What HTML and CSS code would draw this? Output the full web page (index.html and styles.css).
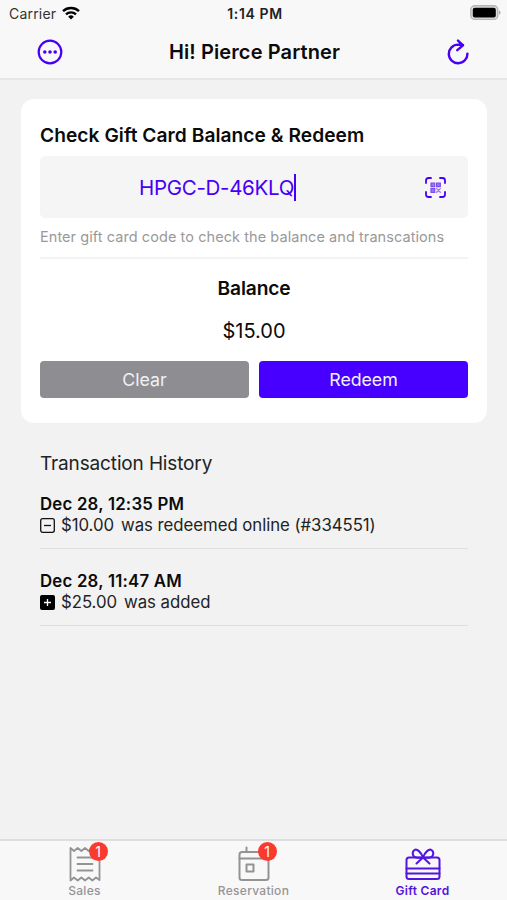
FILE: index.html
```html
<!DOCTYPE html>
<html lang="en">
<head>
<meta charset="utf-8">
<title>Gift Card</title>
<link rel="stylesheet" href="styles.css">
</head>
<body>
<div class="app">
  <header class="header">
    <div class="status">
      <div class="carrier"><span class="carrier-name">Carrier</span>
        <svg class="wifi" width="18" height="14" viewBox="0 0 18 14"><path d="M1 5.2a11.7 11.7 0 0 1 16 0M4 8.3a7.4 7.4 0 0 1 10 0" fill="none" stroke="#000" stroke-width="2.4"/><path d="M9 13.6 6.2 10.7a4 4 0 0 1 5.6 0z"/></svg>
      </div>
      <span class="time">1:14 PM</span>
      <svg class="battery" width="31" height="16" viewBox="0 0 31 16"><rect x=".8" y=".8" width="27" height="13.6" rx="4" fill="#ddd" stroke="#b5b5b5" stroke-width="1.4"/><rect x="2.8" y="2.8" width="23" height="9.6" rx="2"/><path d="M29 5.2q3 2.3 0 4.6z" fill="#aaa"/></svg>
    </div>
    <div class="nav">
      <svg width="26" height="26" viewBox="0 0 26 26"><circle cx="13" cy="13" r="11.3" fill="none" stroke="#4700f5" stroke-width="2.2"/><g fill="#4700f5"><circle cx="7.8" cy="13" r="1.8"/><circle cx="13" cy="13" r="1.8"/><circle cx="18.2" cy="13" r="1.8"/></g></svg>
      <h1 class="title">Hi! Pierce Partner</h1>
      <svg width="24" height="26" viewBox="0 0 24 26" fill="none" stroke="#4700f5" stroke-width="2.4" stroke-linecap="round" stroke-linejoin="round"><path d="M21.4 14.6A9.3 9.3 0 1 1 12.1 5.6L17 6M12 1.6 17 6.3 11.3 11.2"/></svg>
    </div>
  </header>
  <main class="main">
    <section class="card">
      <h2 class="card-title">Check Gift Card Balance &amp; Redeem</h2>
      <div class="field">
        <span class="code">HPGC-D-46KLQ</span><i class="caret"></i>
        <svg class="scan" width="21" height="21" viewBox="0 0 21 21" fill="none" stroke="#4700f5" stroke-width="1.8" stroke-linecap="round"><path d="M1 6V3.5Q1 1 3.5 1H6M15 1h2.5Q20 1 20 3.5V6M20 15v2.5Q20 20 17.5 20H15M6 20H3.5Q1 20 1 17.5V15"/><g fill="#9c78f4" stroke="#7c4cf3" stroke-width="1.2"><path d="M6 6h3.7v3.7H6zM11.600 6h3.700v3.700h-3.700zM6 11.600h3.700v3.700H6z"/></g><path d="m11.600 11.600 3.700 3.700M15.300 11.600l-3.700 3.700" stroke="#9672f5" stroke-width="1.300"/></svg>
      </div>
      <p class="hint">Enter gift card code to check the balance and transcations</p>
      <h3 class="balance-label">Balance</h3>
      <p class="balance">$15.00</p>
      <div class="actions">
        <button class="btn clear">Clear</button>
        <button class="btn redeem">Redeem</button>
      </div>
    </section>
    <section class="history">
      <h2 class="history-title">Transaction History</h2>
      <article class="entry">
        <h3 class="date">Dec 28, 12:35 PM</h3>
        <p class="detail"><svg width="15" height="15" viewBox="0 0 15 15" fill="none" stroke="#111" stroke-width="1.3"><rect x=".7" y=".7" width="13.6" height="13.6" rx="2"/><path d="M4 7.5h7"/></svg><span class="amount">$10.00</span><span class="what">was redeemed online (#334551)</span></p>
      </article>
      <article class="entry">
        <h3 class="date">Dec 28, 11:47 AM</h3>
        <p class="detail"><svg width="15" height="15" viewBox="0 0 15 15"><rect width="15" height="15" rx="2"/><path d="M4 7.5h7M7.5 4v7" stroke="#fff" stroke-width="1.3"/></svg><span class="amount">$25.00</span><span class="what">was added</span></p>
      </article>
    </section>
  </main>
  <nav class="tabs">
    <a class="tab"><span class="icon"><svg width="32" height="36" viewBox="0 0 32 36" fill="none" stroke="#939395" stroke-width="1.8" stroke-linejoin="round" stroke-linecap="round"><path d="M1.5 2 5 5l3.700-3 3.700 3L16 2l3.700 3 3.700-3L27 5l3.500-3v32L27 31.500 23.400 34.500l-3.700-3L16 34.500l-3.600-3-3.700 3L5 31.500 1.500 34.500zM8.500 11.500h15M8.500 18h15M8.500 24.500h15"/></svg><b class="badge">1</b></span><span class="label sales">Sales</span></a>
    <a class="tab"><span class="icon"><svg width="32" height="36" viewBox="0 0 32 36" fill="none" stroke="#939395" stroke-width="2" stroke-linejoin="round" stroke-linecap="round"><rect x="1.500" y="6" width="29" height="28" rx="2.500"/><path d="M1.500 12.500h29M8.500 6V1.500M23.500 6V1.500"/><rect x="8.500" y="18.500" width="7" height="7"/></svg><b class="badge">1</b></span><span class="label">Reservation</span></a>
    <a class="tab active"><span class="icon"><svg width="36" height="36" viewBox="0 0 36 36" fill="none" stroke="#5216e0" stroke-width="2" stroke-linejoin="round" stroke-linecap="round"><rect x="1.500" y="11.500" width="33" height="21.500" rx="2.500"/><path d="M1.500 22.500h33M1.500 27.500h33M18 11.500 11.500 17.500M18 11.500 24.500 17.500M18 11.500C16 6 12 2.500 9.500 4 6.500 6 7.500 11 11 11.500q4 .5 7 0 3 .5 7 0c3.500-.5 4.500-5.500 1.500-7.500C24 2.500 20 6 18 11.500"/></svg></span><span class="label">Gift Card</span></a>
  </nav>
</div>
</body>
</html>
```
FILE: styles.css
```css
* { box-sizing: border-box; }
body, h1, h2, h3, p { margin: 0; font-weight: 400; }
body { font-family: Inter, "Liberation Sans", sans-serif; color: #0b0b0b; background: #f2f2f2; }
svg { display: block; flex: none; }
.app { height: 900px; display: flex; flex-direction: column; }
.header { height: 80px; background: #f8f8f8; border-bottom: 2px solid #e7e7e7; }
.status { height: 27px; display: grid; grid-template-columns: 1fr auto 1fr; align-items: center; padding: 0 6px 0 9px; font-size: 14px; }
.carrier { display: flex; gap: 6px; align-items: center; color: #333; letter-spacing: .2px; }
.wifi { margin-top: -2px; }
.time { font-weight: 600; color: #222; letter-spacing: .6px; }
.battery { justify-self: end; margin-top: -1px; }
.nav { display: flex; justify-content: space-between; align-items: center; height: 49px; padding: 0 37px; }
.title { font-size: 20px; font-weight: 600; letter-spacing: .11px; }
.main { flex: 1; padding: 19px 20px 0 21px; }
.card { height: 324px; background: #fff; border-radius: 13px; padding: 23px 19px 0; }
.card-title { font-size: 19.2px; font-weight: 600; line-height: 26px; letter-spacing: .04px; }
.field { height: 62px; margin-top: 8px; background: #f5f5f5; border-radius: 5px; display: flex; align-items: center; padding: 0 22px 0 99px; color: #4700f5; }
.code { font-size: 20.5px; letter-spacing: -.3px; }
.caret { width: 2px; height: 27px; background: #4700f5; }
.scan { margin-left: auto; }
.hint { font-size: 14.5px; color: #999; line-height: 20px; padding: 9px 0 10px; border-bottom: 2px solid #f3f3f3; letter-spacing: .07px; }
.balance-label { font-size: 19.2px; font-weight: 600; text-align: center; line-height: 26px; margin-top: 16px; letter-spacing: -.15px; }
.balance { font-size: 20px; text-align: center; line-height: 26px; margin-top: 17px; }
.actions { display: grid; grid-template-columns: 1fr 1fr; gap: 10px; margin-top: 17px; }
.btn { height: 37px; border: 0; border-radius: 4px; font: 17.8px Inter, sans-serif; color: #f1f1f3; padding: 0; letter-spacing: -.05px; }
.clear { background: #8e8d92; }
.redeem { background: #4700ff; }
.history { padding: 28px 19px 0; }
.history-title { font-size: 19px; line-height: 26px; color: #222; letter-spacing: -.14px; }
.entry { height: 77px; border-bottom: 1px solid #dedede; padding-top: 22px; }
.history-title + .entry { padding-top: 17px; height: 72px; }
.date { font-size: 16.8px; font-weight: 600; line-height: 21px; letter-spacing: .22px; }
.detail { display: flex; align-items: center; font-size: 16.8px; line-height: 21px; color: #222; letter-spacing: -.05px; }
.amount { margin: 0 7px 0 6px; }
.tabs { height: 61px; border-top: 2px solid #dedede; background: #f8f8f8; display: grid; grid-template-columns: repeat(3, 1fr); }
.tab { display: flex; flex-direction: column; align-items: center; padding-top: 5px; color: #959597; }
.active { color: #5212e0; }
.icon { position: relative; }
.badge { position: absolute; left: 20px; top: -4px; width: 19px; height: 19px; border-radius: 50%; background: #fa392f; color: #fff; font-size: 14px; font-weight: 400; line-height: 19px; text-align: center; }
.label { font-size: 12px; line-height: 18px; font-weight: 500; letter-spacing: .28px; }
.active .label { font-weight: 600; }
```
